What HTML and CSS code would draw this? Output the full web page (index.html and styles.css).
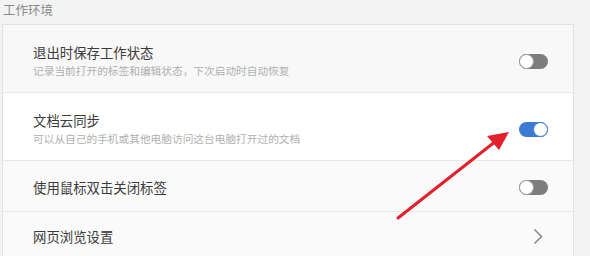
FILE: index.html
```html
<!DOCTYPE html>
<html lang="zh-CN">
<head>
<meta charset="utf-8">
<link rel="stylesheet" href="styles.css">
</head>
<body>
<div class="page">
  <div class="section-title">工作环境</div>
  <div class="card">
    <div class="row row-a">
      <div class="text">
        <div class="title">退出时保存工作状态</div>
        <div class="sub">记录当前打开的标签和编辑状态，下次启动时自动恢复</div>
      </div>
      <span class="toggle"><span class="knob"></span></span>
    </div>
    <div class="row row-b">
      <div class="text">
        <div class="title">文档云同步</div>
        <div class="sub">可以从自己的手机或其他电脑访问这台电脑打开过的文档</div>
      </div>
      <span class="toggle on"><span class="knob"></span></span>
    </div>
    <div class="row row-c">
      <div class="text">
        <div class="title">使用鼠标双击关闭标签</div>
      </div>
      <span class="toggle"><span class="knob"></span></span>
    </div>
    <div class="row row-d">
      <div class="text">
        <div class="title">网页浏览设置</div>
      </div>
      <svg class="chevron" width="10" height="17" viewBox="0 0 10 17"><polyline points="1.5,1.5 8.5,8.5 1.5,15.5" fill="none" stroke="#8a8a8a" stroke-width="1.6"/></svg>
    </div>
  </div>
  <svg class="arrow" width="590" height="256" viewBox="0 0 590 256">
    <line x1="398" y1="218" x2="496" y2="141" stroke="#e3202b" stroke-width="3" stroke-linecap="round"/>
    <polygon points="509,132 487,136 499,150" fill="#e3202b"/>
  </svg>
</div>
</body>
</html>
```
FILE: styles.css
```css
html, body {
  margin: 0;
  padding: 0;
}
body {
  background: #f3f3f3;
  font-family: "Noto Sans CJK SC", "Noto Sans", sans-serif;
  width: 590px;
  height: 256px;
  overflow: hidden;
}
.page {
  position: relative;
  width: 590px;
  height: 256px;
}
.section-title {
  font-size: 12.5px;
  line-height: 18px;
  color: #8a8a8a;
  padding: 1px 0 5px 3px;
}
.card {
  margin-left: 2px;
  width: 570px;
  border: 1px solid #e2e2e2;
  border-bottom: none;
  background: #fff;
}
.row {
  display: flex;
  align-items: center;
  justify-content: space-between;
  padding-left: 30px;
  padding-right: 25px;
  border-bottom: 1px solid #e8e8e8;
}
.row-a {
  background: #f8f8f8;
  padding-top: 17px;
  padding-bottom: 12px;
}
.row-b {
  background: #ffffff;
  padding-top: 17px;
  padding-bottom: 12px;
}
.row-c {
  background: #fafafa;
  padding-top: 16px;
  padding-bottom: 14px;
}
.row-d {
  background: #fafafa;
  padding-top: 14px;
  padding-bottom: 16px;
  padding-right: 30px;
  border-bottom: none;
}
.title {
  font-size: 13.4px;
  line-height: 20px;
  color: #3c3c3c;
}
.sub {
  font-size: 10.7px;
  line-height: 18px;
  color: #b0b0b0;
}
.toggle {
  position: relative;
  width: 29px;
  height: 15px;
  border-radius: 8px;
  background: #7d7d7d;
  display: block;
}
.toggle .knob {
  position: absolute;
  left: 0;
  top: 0;
  width: 13px;
  height: 13px;
  border-radius: 50%;
  background: #fff;
  border: 1px solid #9a9a9a;
}
.toggle.on {
  background: #3a7ad2;
}
.toggle.on .knob {
  left: 14px;
  border-color: #3a7ad2;
}
.chevron {
  display: block;
}
.arrow {
  position: absolute;
  left: 0;
  top: 0;
  pointer-events: none;
}
```
